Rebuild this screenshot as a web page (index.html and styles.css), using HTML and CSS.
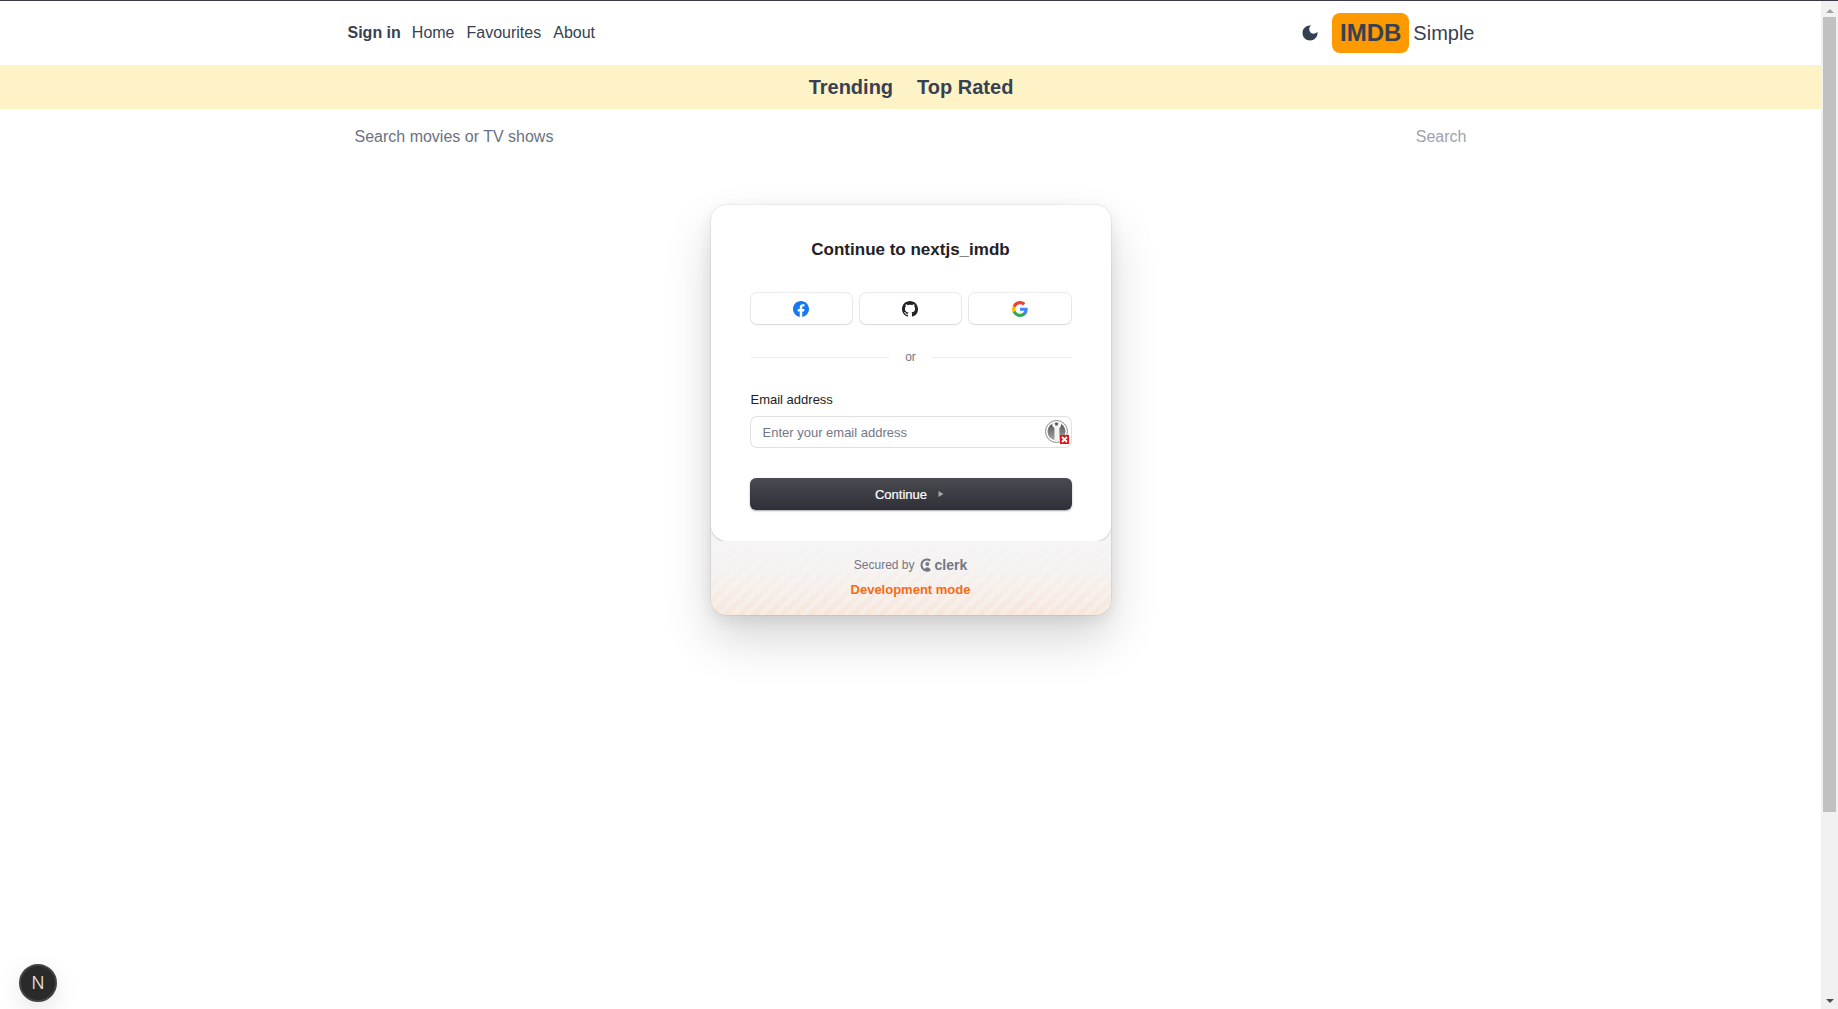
FILE: index.html
```html
<!DOCTYPE html>
<html lang="en">
<head>
    <meta charset="UTF-8">
    <meta name="viewport" content="width=device-width, initial-scale=1.0">
    <title>IMDB Simple</title>
    <link rel="stylesheet" href="styles.css">
</head>
<body>
    <div class="page">
        <!-- Top navigation -->
        <header class="header">
            <nav class="nav">
                <a class="nav-signin" href="#">Sign in</a>
                <a href="#">Home</a>
                <a href="#">Favourites</a>
                <a href="#">About</a>
            </nav>
            <div class="brand">
                <svg class="moon" viewBox="0 0 24 24" width="20" height="20"><path d="M12 3c-4.97 0-9 4.03-9 9s4.03 9 9 9 9-4.03 9-9c0-.46-.04-.92-.1-1.36-.98 1.37-2.58 2.26-4.4 2.26-2.98 0-5.4-2.42-5.4-5.4 0-1.81.89-3.42 2.26-4.4-.44-.06-.9-.1-1.36-.1z"/></svg>
                <span class="badge">IMDB</span>
                <span class="brand-name">Simple</span>
            </div>
        </header>

        <div class="tabs">
            <a href="#">Trending</a>
            <a href="#">Top Rated</a>
        </div>

        <form class="search">
            <input type="text" placeholder="Search movies or TV shows">
            <button type="button" disabled>Search</button>
        </form>

        <!-- Sign in card -->
        <div class="card">
            <div class="card-main">
                <h1>Continue to nextjs_imdb</h1>
                <div class="socials">
                    <button type="button">
                        <svg viewBox="0 0 16 16" width="16" height="16"><path fill="#1877f2" d="M16 8.05C16 3.6 12.42 0 8 0S0 3.6 0 8.05c0 4.02 2.93 7.35 6.75 7.95v-5.62H4.72V8.05h2.03V6.28c0-2.02 1.2-3.13 3.02-3.13.88 0 1.79.16 1.79.16v1.98h-1c-1 0-1.31.62-1.31 1.26v1.5h2.22l-.35 2.33H9.25V16C13.07 15.4 16 12.07 16 8.05z"/></svg>
                    </button>
                    <button type="button">
                        <svg viewBox="0 0 16 16" width="16" height="16"><path fill="#1f2328" d="M8 0C3.58 0 0 3.58 0 8c0 3.54 2.29 6.53 5.47 7.59.4.07.55-.17.55-.38 0-.19-.01-.82-.01-1.49-2.01.37-2.53-.49-2.69-.94-.09-.23-.48-.94-.82-1.13-.28-.15-.68-.52-.01-.53.63-.01 1.08.58 1.23.82.72 1.21 1.87.87 2.33.66.07-.52.28-.87.51-1.07-1.78-.2-3.64-.89-3.64-3.95 0-.87.31-1.59.82-2.15-.08-.2-.36-1.02.08-2.12 0 0 .67-.21 2.2.82.64-.18 1.32-.27 2-.27s1.36.09 2 .27c1.53-1.04 2.2-.82 2.2-.82.44 1.1.16 1.92.08 2.12.51.56.82 1.27.82 2.15 0 3.07-1.87 3.75-3.65 3.95.29.25.54.73.54 1.48 0 1.07-.01 1.93-.01 2.2 0 .21.15.46.55.38A8.01 8.01 0 0 0 16 8c0-4.42-3.58-8-8-8z"/></svg>
                    </button>
                    <button type="button">
                        <svg viewBox="0 0 24 24" width="16" height="16"><path fill="#4285f4" d="M23.5 12.3c0-.8-.1-1.6-.2-2.3H12v4.5h6.5c-.3 1.5-1.1 2.7-2.4 3.6v3h3.9c2.200-2.100 3.500-5.200 3.500-8.800z"/><path fill="#34a853" d="M12 24c3.200 0 6-1.100 8-2.900l-3.900-3c-1.100.7-2.500 1.200-4.100 1.200-3.100 0-5.800-2.100-6.700-5H1.300v3.100C3.300 21.300 7.300 24 12 24z"/><path fill="#fbbc05" d="M5.300 14.300c-.5-1.500-.5-3.100 0-4.600V6.600h-4c-1.700 3.300-1.700 7.500 0 10.800l4-3.100z"/><path fill="#ea4335" d="M12 4.800c1.800 0 3.300.6 4.600 1.800l3.400-3.400C17.900 1.200 15.200 0 12 0 7.300 0 3.300 2.700 1.300 6.600l4 3.100c.9-2.800 3.600-4.900 6.700-4.900z"/></svg>
                    </button>
                </div>
                <div class="divider"><span>or</span></div>
                <label class="field-label">Email address</label>
                <div class="field">
                    <input type="text" placeholder="Enter your email address">
                    <svg class="key-icon" viewBox="0 0 24 24" width="24" height="24">
                        <defs>
                            <linearGradient id="key-disc" x1="0" y1="0" x2="0" y2="1">
                                <stop offset="0" stop-color="#4f4f4f"/>
                                <stop offset="1" stop-color="#a8a8a8"/>
                            </linearGradient>
                        </defs>
                        <circle cx="11.500" cy="11.500" r="11" fill="#fff" stroke="#8a8a8a" stroke-width="1"/>
                        <circle cx="11.500" cy="11.500" r="9" fill="url(#key-disc)"/>
                        <path fill="#f2f2f2" d="M8 2.500h1.800l.5 3h2.400l.5-3H15c1.500 1.200 1.600 4.200-.6 5.600v12.400h-5V8.100C7 6.700 6.500 3.700 8 2.500z"/>
                        <rect x="15" y="15" width="9" height="9" fill="#ee1111"/>
                        <path stroke="#fff" stroke-width="1.800" d="M17 17l5 5M22 17l-5 5"/>
                    </svg>
                </div>
                <button type="button" class="continue">Continue <svg viewBox="0 0 10 10" width="10" height="10"><path fill="#a5a5aa" d="M2.500 2l5 3-5 3z"/></svg></button>
            </div>
            <div class="card-footer">
                <div class="secured">
                    <span>Secured by</span>
                    <span class="clerk">
                        <svg viewBox="0 0 14 14" width="14" height="14"><path fill="#747686" d="M7 .5c1.500 0 2.800.5 3.900 1.300L9.800 3.400C8.900 2.900 8 2.500 7 2.500 4.500 2.500 2.500 4.500 2.500 7s2 4.500 4.500 4.500c1 0 1.900-.4 2.800-.9l1.100 1.600c-1.100.8-2.400 1.300-3.900 1.300C3.400 13.500.5 10.600.5 7S3.400.5 7 .5z"/><circle cx="7.300" cy="6" r="2" fill="#747686"/><path fill="#747686" d="M4.300 12.200c.4-2 1.600-3 3-3s2.600 1 3 3c-.9.8-1.900 1.300-3 1.300s-2.100-.5-3-1.300z"/></svg>
                        clerk
                    </span>
                </div>
                <div class="dev-mode">Development mode</div>
            </div>
        </div>

        <button type="button" class="next-badge">N</button>
    </div>

    <!-- Browser scrollbar -->
    <div class="scrollbar">
        <div class="arrow-up"></div>
        <div class="thumb"></div>
        <div class="arrow-down"></div>
    </div>
</body>
</html>
```

FILE: styles.css
```css
* {
    box-sizing: border-box;
}
html, body {
    margin: 0;
    height: 100%;
}
body {
    display: flex;
    height: 1009px;
    overflow: hidden;
    border-top: 1px solid #3c3a48;
    font-family: "Liberation Sans", Arial, sans-serif;
    color: #374151;
    background: #fff;
}
a {
    color: inherit;
    text-decoration: none;
}
button {
    font-family: inherit;
}

.page {
    flex: 1;
    position: relative;
}

/* Header */
.header {
    width: 1152px;
    height: 64px;
    margin: 0 auto;
    padding: 0 12px 0 13px;
    display: flex;
    align-items: center;
    justify-content: space-between;
}
.nav {
    display: flex;
    gap: 12px;
    font-size: 16px;
}
.nav-signin {
    margin-right: -1px;
    font-weight: 700;
}
.brand {
    display: flex;
    align-items: center;
}
.moon {
    fill: #334155;
    margin-right: 12px;
}
.badge {
    padding: 4px 8px;
    height: 40px;
    line-height: 32px;
    border-radius: 8px;
    background: #ff9900;
    font-size: 24px;
    font-weight: 700;
}
.brand-name {
    margin-left: 4px;
    font-size: 20px;
}

.tabs {
    height: 44px;
    padding-left: 1px;
    display: flex;
    justify-content: center;
    align-items: center;
    gap: 24px;
    background: #fef3c7;
    font-size: 20px;
    font-weight: 700;
}

.search {
    width: 1152px;
    height: 54px;
    margin: 0 auto;
    padding: 2px 20px 0;
    display: flex;
    align-items: center;
    justify-content: space-between;
}
.search input {
    flex: 1;
    border: 0;
    padding: 0;
    outline: none;
    font: 16px "Liberation Sans", Arial, sans-serif;
}
.search input::placeholder {
    color: #6b7280;
    opacity: 1;
}
.search button {
    border: 0;
    padding: 0;
    background: none;
    font-size: 16px;
    color: #9ca3af;
}

/* Sign in card */
.card {
    width: 400px;
    margin: 42px auto 0;
    border-radius: 16px;
    background: #f5f5f5;
    box-shadow: 0 0 0 1px rgba(0, 0, 0, .05), 0 5px 15px rgba(0, 0, 0, .08), 0 24px 48px rgba(0, 0, 0, .16);
    overflow: hidden;
}
.card-main {
    height: 336px;
    padding: 34px 40px 0;
    background: #fff;
    border-radius: 0 0 16px 16px;
    box-shadow: 0 1px 2px rgba(0, 0, 0, .18);
    position: relative;
}
.card-main h1 {
    margin: 0;
    font-size: 17px;
    line-height: 22px;
    font-weight: 700;
    text-align: center;
    color: #212126;
}
.socials {
    margin-top: 32px;
    display: grid;
    grid-template-columns: 101px 101px 102px;
    gap: 8px;
}
.socials button {
    height: 31px;
    padding: 0;
    display: flex;
    align-items: center;
    justify-content: center;
    background: #fff;
    border: 0;
    border-radius: 6px;
    box-shadow: 0 0 0 1px rgba(0, 0, 0, .07), 0 1px 2px rgba(0, 0, 0, .1);
}
.divider {
    margin-top: 25px;
    height: 16px;
    display: flex;
    align-items: center;
    gap: 16px;
    font-size: 12px;
    color: #747686;
}
.divider::before, .divider::after {
    content: "";
    flex: 1;
    height: 1px;
    background: #ebebeb;
}
.field-label {
    display: block;
    margin-top: 27px;
    font-size: 13px;
    line-height: 16px;
    color: #212126;
}
.field {
    margin-top: 9px;
    position: relative;
}
.field input {
    display: block;
    width: 100%;
    height: 30px;
    padding: 0 12px;
    border: 0;
    border-radius: 6px;
    box-shadow: 0 0 0 1px #e0e0e0;
    outline: none;
    font: 13px "Liberation Sans", Arial, sans-serif;
}
.field input::placeholder {
    color: #747686;
    opacity: 1;
}
.key-icon {
    position: absolute;
    right: 2px;
    top: 3px;
}
.continue {
    width: calc(100% + 2px);
    height: 32px;
    margin: 31px -1px 0;
    padding: 0;
    display: flex;
    align-items: center;
    justify-content: center;
    gap: 9px;
    border: 0;
    border-radius: 6px;
    background: linear-gradient(#4a4a51, #2f2f37);
    box-shadow: 0 1px 2px rgba(0, 0, 0, .35);
    color: #fff;
    font-size: 13px;
    -webkit-text-stroke: .2px #fff;
}
.card-footer {
    height: 74px;
    padding-top: 15px;
    background:
        repeating-linear-gradient(-45deg, rgba(243, 107, 22, .05) 0 5px, transparent 5px 10px),
        linear-gradient(#f5f5f5, #f8ece4);
    text-align: center;
    position: relative;
}
.card-footer::before {
    content: "";
    position: absolute;
    inset: 0;
    background: linear-gradient(#f5f5f5 5%, rgba(245, 245, 245, 0));
}
.secured, .dev-mode {
    position: relative;
}
.secured {
    display: flex;
    justify-content: center;
    align-items: center;
    gap: 5px;
    height: 18px;
    font-size: 12px;
    color: #747686;
}
.clerk {
    display: flex;
    align-items: center;
    gap: 1px;
    font-size: 14px;
    font-weight: 700;
}
.dev-mode {
    margin-top: 8px;
    font-size: 13px;
    font-weight: 700;
    color: #f36b16;
}

.next-badge {
    position: absolute;
    left: 19px;
    top: 963px;
    width: 38px;
    height: 38px;
    padding: 0;
    border: 2px solid #444;
    border-radius: 50%;
    background: #2a2a2a;
    color: #eee;
    font: 300 17px Inter, sans-serif;
    box-shadow: 0 8px 24px rgba(0, 0, 0, .1);
}

/* Scrollbar */
.scrollbar {
    width: 17px;
    background: #f1f1f1;
    display: flex;
    flex-direction: column;
    align-items: center;
}
.thumb {
    width: 13px;
    height: 795px;
    margin-top: 4px;
    background: #c1c1c1;
}
.arrow-up, .arrow-down {
    width: 0;
    border-left: 4px solid transparent;
    border-right: 4px solid transparent;
}
.arrow-up {
    margin-top: 8px;
    border-bottom: 4px solid #a3a3a3;
}
.arrow-down {
    margin-top: auto;
    margin-bottom: 6px;
    border-top: 4px solid #505050;
}
```
